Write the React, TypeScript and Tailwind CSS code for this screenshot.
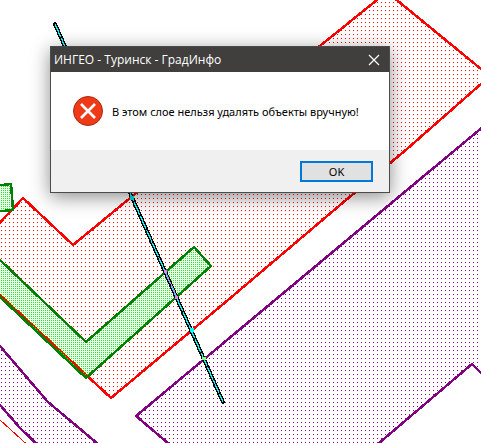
import React from "react";

function DotPattern({ id, pitch, x, y, color }: { id: string; pitch: number; x: number; y: number; color: string }) {
  return (
    <pattern id={id} width={pitch} height={pitch} patternUnits="userSpaceOnUse">
      <rect x={x} y={y} width="1" height="1" fill={color} />
    </pattern>
  );
}

function ParcelMap() {
  return (
    <svg className="absolute inset-0 h-full w-full" shapeRendering="crispEdges" aria-hidden="true">
      <defs>
        <DotPattern id="red-dots" pitch={4} x={1} y={2} color="#ff0000" />
        <DotPattern id="purple-dots" pitch={4} x={1} y={2} color="#800080" />
        <DotPattern id="green-dots" pitch={2} x={1} y={0} color="#00ff00" />
      </defs>
      {/* parcels */}
      <g strokeWidth="2.5">
        <path d="M136 416 L275 300 L395 200 L481 128 L600 28 L600 500 L471 363 L372 449 L175 449 Z" fill="url(#purple-dots)" />
        <path d="M175 449 L136 416 L275 300 L395 200 L490 121" fill="none" stroke="#800080" />
        <path d="M372 449 L472 364 L490 382" fill="#fff" stroke="#800080" />
        <path d="M-8 337 L0 346 L48 402 L104 449 L42 449 L20 428 L0 405 L-8 396 Z" fill="url(#purple-dots)" stroke="#800080" />
        <path d="M-8 413 L0 420 L32 449" fill="none" stroke="#ff0000" strokeWidth="1" />
        <path d="M-8 231 L23 198 L73 245 L135 194 L321 45 L387 -8 L481 69 L490 76 L407 149 L346 200 L228 300 L111 398 L0 295 L-8 287 Z" fill="url(#red-dots)" stroke="#ff0000" />
        <path d="M-8 252 L0 260 L86 342 L194 247 L211 266 L86 378 L0 297 L-8 289 Z" fill="url(#green-dots)" stroke="#008000" />
        <path d="M0 295 L86 374" fill="none" stroke="#ff0000" strokeWidth="1" />
        <path d="M-8 185 L2 185 L11 184 L13 210 L-8 212 Z" fill="url(#green-dots)" stroke="#008000" />
      </g>
      {/* section line */}
      <path d="M55 24 L223 402" stroke="#000" strokeWidth="4" strokeLinecap="round" />
      <path d="M55 24 L223 402" stroke="#00ffff" strokeWidth="1.3" strokeDasharray="14 1" />
      <path d="M165 271 L177 297" stroke="#c080ff" strokeWidth="1" />
      <rect x="130" y="196" width="4" height="4" fill="#00e5e5" />
      <rect x="164" y="270" width="3" height="3" fill="#ee82ee" />
      <rect x="175" y="296" width="3" height="3" fill="#ee82ee" />
      <rect x="190" y="328" width="4" height="4" fill="#00ffff" />
      <rect x="202" y="357" width="4" height="3" fill="#80ff80" />
    </svg>
  );
}

function ErrorIcon() {
  return (
    <svg className="h-8 w-8 shrink-0" viewBox="0 0 32 32" aria-hidden="true">
      <circle cx="16" cy="16" r="14.5" fill="#f03a17" stroke="#a52a16" />
      <path d="M9 9 L23 23 M23 9 L9 23" stroke="#fff" strokeWidth="2.6" />
    </svg>
  );
}

export default function App() {
  return (
    <main className="relative min-h-screen overflow-hidden bg-white font-['Noto_Sans','Open_Sans',sans-serif] text-xs text-black">
      <ParcelMap />
      <div
        role="alertdialog"
        aria-labelledby="dialog-title"
        aria-describedby="dialog-message"
        className="absolute left-[50px] top-[46px] w-[340px] border border-[#4b4b4b] bg-white shadow-[0_4px_18px_rgba(0,0,0,0.45)]"
      >
        <header className="flex h-[25px] items-center justify-between bg-[#403f3d] pl-[3px] pr-[7px] text-white">
          <h1 id="dialog-title" className="font-['Open_Sans','Noto_Sans',sans-serif]">ИНГЕО - Туринск - ГрадИнфо</h1>
          <button type="button" aria-label="Закрыть" className="flex h-4 w-4 items-center justify-center">
            <svg className="h-3 w-3" viewBox="0 0 12 12" aria-hidden="true">
              <path d="M1 1 L11 11 M11 1 L1 11" stroke="#fff" strokeWidth="1.2" />
            </svg>
          </button>
        </header>
        <div className="flex h-[78px] items-center gap-2 whitespace-nowrap pl-[21px]">
          <ErrorIcon />
          <p id="dialog-message" className="pt-0.5 text-[11px] leading-4">
            В этом слое нельзя удалять объекты вручную!
          </p>
        </div>
        <footer className="flex justify-end bg-[#f0f0f0] px-4 pb-2.5 pt-[11px]">
          <button type="button" className="flex h-[21px] w-[73px] items-center justify-center border-2 border-[#0078d7] bg-[#e1e1e1] text-[11px] leading-4">
            OK
          </button>
        </footer>
      </div>
    </main>
  );
}
